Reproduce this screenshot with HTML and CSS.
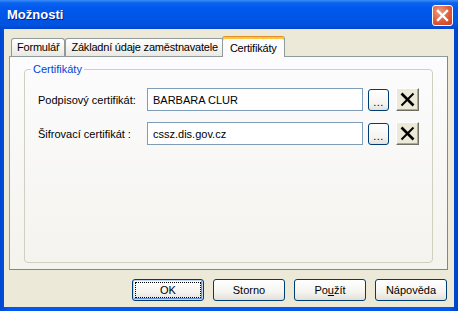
FILE: index.html
```html
<!DOCTYPE html>
<html lang="cs">
<head>
    <meta charset="UTF-8">
    <title>Možnosti</title>
    <link rel="stylesheet" href="styles.css">
</head>
<body>
    <div class="window">
        <div class="titlebar">
            <span class="title">Možnosti</span>
            <button class="close" title="Zavřít">
                <svg width="13" height="13" viewBox="0 0 13 13">
                    <path d="M2 2 L11 11 M11 2 L2 11" stroke="#fff" stroke-width="2.4" stroke-linecap="square"/>
                </svg>
            </button>
        </div>

        <div class="client">
            <div class="tabs">
                <div class="tab">Formulář</div>
                <div class="tab">Základní údaje zaměstnavatele</div>
                <div class="tab active">Certifikáty</div>
            </div>

            <div class="panel">
                <fieldset class="group">
                    <legend>Certifikáty</legend>
                    <div class="row">
                        <label for="sign">Podpisový certifikát:</label>
                        <input type="text" id="sign" value="BARBARA CLUR">
                        <button class="browse">...</button>
                        <button class="remove">
                            <svg width="15" height="15" viewBox="0 0 15 15">
                                <path d="M1.5 1.5 L13.5 13.5" stroke="#000" stroke-width="2.6"/>
                                <path d="M13.5 1.5 L1.5 13.5" stroke="#000" stroke-width="2"/>
                            </svg>
                        </button>
                    </div>
                    <div class="row">
                        <label for="crypt">Šifrovací certifikát :</label>
                        <input type="text" id="crypt" value="cssz.dis.gov.cz">
                        <button class="browse">...</button>
                        <button class="remove">
                            <svg width="15" height="15" viewBox="0 0 15 15">
                                <path d="M1.5 1.5 L13.5 13.5" stroke="#000" stroke-width="2.6"/>
                                <path d="M13.5 1.5 L1.5 13.5" stroke="#000" stroke-width="2"/>
                            </svg>
                        </button>
                    </div>
                </fieldset>
            </div>

            <div class="actions">
                <button class="btn default">OK</button>
                <button class="btn">Storno</button>
                <button class="btn">Po<u>u</u>žít</button>
                <button class="btn">Nápověda</button>
            </div>
        </div>
    </div>
</body>
</html>
```

FILE: styles.css
```css
/* Window frame */
* {
    box-sizing: border-box;
}

body {
    margin: 0;
    font-family: "Liberation Sans", Arial, sans-serif;
    font-size: 11px;
    color: #000;
    background: #fff;
}

.window {
    width: 458px;
    height: 311px;
    display: flex;
    flex-direction: column;
    background: linear-gradient(90deg, #0048D0, #0058EE 2%, #0058EE 98%, #0040C0);
}

.titlebar {
    height: 29px;
    display: flex;
    align-items: center;
    padding: 0 5px 0 7px;
    background: linear-gradient(#3C8CF6, #0A63EE 10%, #0058EE 30%, #0055E5 60%, #0053E0 85%, #0046CF);
}

.title {
    flex: 1;
    font-weight: bold;
    font-size: 13px;
    color: #fff;
    text-shadow: 1px 1px #0A1C8C;
}

.close {
    width: 21px;
    height: 21px;
    margin-top: 2px;
    padding: 0;
    display: flex;
    align-items: center;
    justify-content: center;
    border: 1px solid #fff;
    border-radius: 3px;
    background: radial-gradient(circle at 35% 30%, #F09B80, #E0593A 55%, #C2401F);
}

.client {
    flex: 1;
    margin: 0 4px 4px;
    padding: 7px 6px 0 5px;
    background: #ECE9D8;
    display: flex;
    flex-direction: column;
}

/* Tabs */
.tabs {
    display: flex;
    align-items: flex-start;
    height: 20px;
    padding-left: 2px;
    position: relative;
    z-index: 1;
}

.tab {
    height: 18px;
    margin-top: 2px;
    padding: 0 5px;
    line-height: 17px;
    letter-spacing: -0.2px;
    border: 1px solid #919B9C;
    border-bottom: none;
    border-radius: 3px 3px 0 0;
    background: linear-gradient(#FFFFFF, #F3F2EE 60%, #E9E8E2);
    white-space: nowrap;
}

.tab.active {
    height: 21px;
    margin: 0 -2px;
    padding: 2px 7px 0;
    line-height: 19px;
    border-top: 1px solid #E68B2C;
    box-shadow: inset 0 2px #FFC83C;
    background: #FCFCFE;
}

.panel {
    height: 214px;
    padding: 6px 14px 6px;
    border: 1px solid #919B9C;
    border-right-color: #7F8889;
    border-bottom-color: #7F8889;
    background: linear-gradient(#FCFCFE, #F4F3EE);
    display: flex;
}

/* Group box */
.group {
    flex: 1;
    margin: 0;
    padding: 12px 0 0 6px;
    border: 1px solid #D0D0BF;
    border-radius: 4px;
}

.group legend {
    padding: 0 2px;
    line-height: 13px;
    color: #0046D5;
}

.row {
    display: flex;
    align-items: center;
    height: 23px;
    margin-bottom: 11px;
    padding-left: 7px;
}

.row label {
    width: 109px;
}

.row input {
    width: 216px;
    height: 23px;
    padding: 0 0 0 5px;
    border: 1px solid #7F9DB9;
    background: #fff;
    font-family: inherit;
    font-size: 11px;
    color: #000;
    outline: none;
}

.browse {
    width: 21px;
    height: 22px;
    margin-left: 5px;
    padding: 6px 0 0;
    border: 1px solid #003C74;
    border-radius: 3px;
    background: linear-gradient(#FFFFFF, #F4F3EF 70%, #E3E1D7);
    font-family: inherit;
    font-size: 11px;
    line-height: 11px;
    letter-spacing: 0.5px;
}

.remove {
    width: 23px;
    height: 23px;
    margin-left: 7px;
    padding: 0;
    display: flex;
    align-items: center;
    justify-content: center;
    border: 1px solid;
    border-color: #FFFFFF #716F64 #716F64 #FFFFFF;
    box-shadow: inset -1px -1px #ACA899;
    background: #ECE9D8;
}

/* Dialog buttons */
.actions {
    display: flex;
    justify-content: flex-end;
    gap: 9px;
    margin-top: 9px;
    padding-right: 1px;
}

.btn {
    width: 72px;
    height: 22px;
    padding: 0;
    border: 1px solid #003C74;
    border-radius: 3px;
    background: linear-gradient(#FFFFFF, #F5F4F0 60%, #E3E1D6);
    font-family: inherit;
    font-size: 11px;
    color: #000;
}

.btn.default {
    box-shadow: inset 0 0 0 1px #C2D6F7, inset -1px -1px 0 1px #6A8ED8;
    outline: 1px dotted #000;
    outline-offset: -4px;
}
```
